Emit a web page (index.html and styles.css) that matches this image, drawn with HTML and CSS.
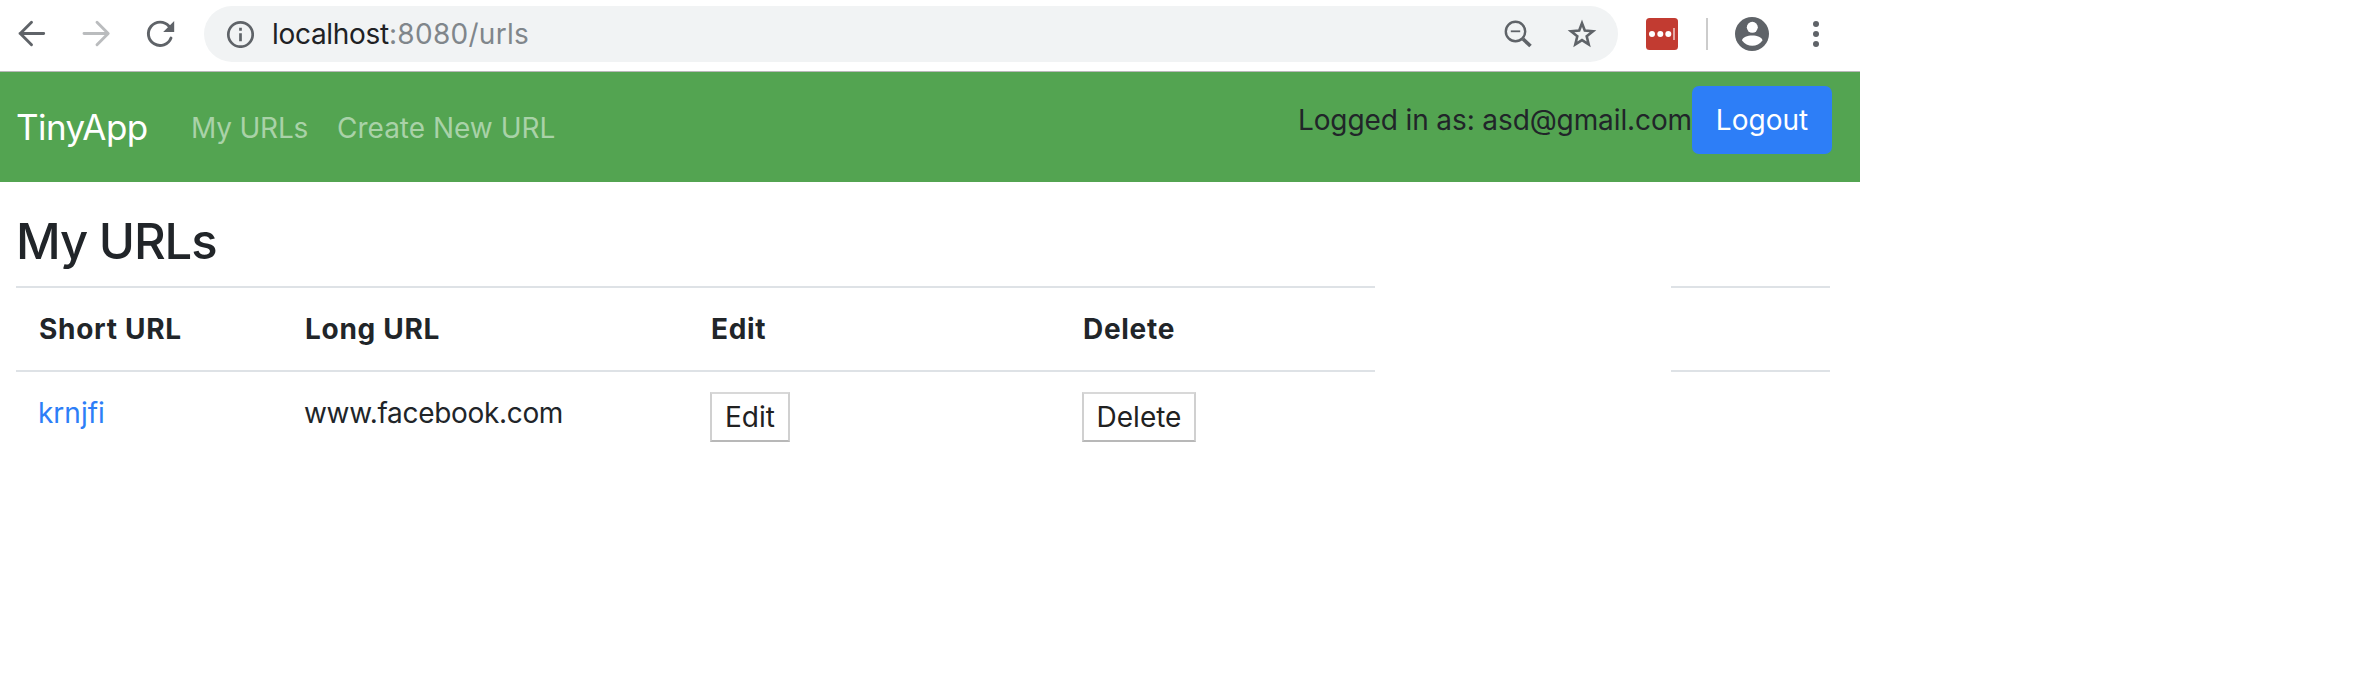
FILE: index.html
```html
<!DOCTYPE html>
<html lang="en">
<head>
<meta charset="utf-8">
<title>TinyApp</title>
<link rel="stylesheet" href="styles.css">
</head>
<body>
<div class="window">
  <header class="toolbar">
    <svg class="nav-icon" viewBox="0 0 32 32"><path d="M28.700 15.500H5M16.500 4.300L5.300 15.500 16.500 26.700"/></svg>
    <svg class="nav-icon disabled" viewBox="0 0 32 32"><path d="M5 15.500H28.500M18 4.300L29.200 15.500 18 26.700"/></svg>
    <svg class="nav-icon" viewBox="0 0 32 32"><path d="M28 20A11.700 11.700 0 1 1 26 8.200"/><path class="solid" d="M31.200 3V14H20.200Z"/></svg>
    <div class="omnibox">
      <svg class="info" viewBox="0 0 28 28"><circle cx="14.500" cy="14.500" r="12.200"/><path d="M14.500 13.300V21.300M14.500 7.700V10.700"/></svg>
      <div class="address"><span class="host">localhost</span><span class="path">:8080/urls</span></div>
      <svg class="magnifier" viewBox="0 0 28 28"><circle cx="11.500" cy="11.500" r="9.700"/><path class="minus" d="M6.800 11.300H16.200"/><path class="handle" d="M19 19L26.500 26"/></svg>
      <svg class="star" viewBox="0 0 30 30"><path d="M15 4.200L17.800 11.500 26 12.200 19.700 17.300 21.700 25.400 15 21.100 8.300 25.400 10.300 17.300 4 12.200 12.200 11.500Z"/></svg>
    </div>
    <svg class="extension" viewBox="0 0 32 32"><rect width="32" height="32" rx="3.500"/><circle cx="6" cy="16" r="3"/><circle cx="14.300" cy="16" r="3"/><circle cx="22.300" cy="16" r="3"/><path d="M28 10V22"/></svg>
    <div class="divider"></div>
    <svg class="profile" viewBox="0 0 34 34"><circle class="disc" cx="17" cy="17" r="17"/><circle cx="17.300" cy="10.300" r="5.500"/><path d="M7 23.500C8 16.800 26.500 16.800 27.500 23.500 22.500 30.600 12 30.600 7 23.500Z"/></svg>
    <svg class="menu" viewBox="0 0 6 28"><circle cx="3" cy="4" r="3"/><circle cx="3" cy="14" r="3"/><circle cx="3" cy="24" r="3"/></svg>
  </header>
  <nav class="navbar">
    <a class="brand">TinyApp</a>
    <a class="link my-urls">My URLs</a>
    <a class="link create">Create New URL</a>
    <div class="account">
      <span class="user">Logged in as: asd@gmail.com</span>
      <button class="logout">Logout</button>
    </div>
  </nav>
  <main class="content">
    <h1 class="title">My URLs</h1>
    <div class="tables">
      <table class="table urls">
        <colgroup><col class="col-short"><col class="col-long"><col class="col-edit"><col class="col-delete"></colgroup>
        <thead><tr><th>Short URL</th><th>Long URL</th><th>Edit</th><th>Delete</th></tr></thead>
        <tbody><tr><td><a class="short">krnjfi</a></td><td><span class="long">www.facebook.com</span></td><td><button class="action edit">Edit</button></td><td><button class="action delete">Delete</button></td></tr></tbody>
      </table>
      <table class="table spare"><thead><tr><th></th></tr></thead></table>
    </div>
  </main>
</div>
</body>
</html>
```
FILE: styles.css
```css
* { box-sizing: border-box; }
body { margin: 0; background: #fff; color: #212529; font: 28px/42px Inter, "Liberation Sans", sans-serif; }
button { font: inherit; }
svg { display: block; flex: none; fill: none; }
.window { width: 1860px; }

.toolbar { display: flex; align-items: center; height: 72px; padding: 0 0 3px 15px; border-bottom: 1px solid #b8b8b8; }
.nav-icon { width: 32px; height: 32px; margin-right: 32px; stroke: #5f6368; stroke-width: 2.900; stroke-linecap: round; stroke-linejoin: round; }
.nav-icon.disabled { stroke: #babcbe; }
.nav-icon .solid { fill: #5f6368; stroke: none; }
.omnibox { display: flex; align-items: center; width: 1414px; height: 56px; margin-left: -3px; padding-left: 22px; border-radius: 28px; background: #f1f3f4; }
.info { width: 28px; height: 28px; stroke: #5f6368; stroke-width: 2.700; }
.address { flex: none; width: 1250px; padding-left: 18px; letter-spacing: -0.300px; white-space: nowrap; }
.host { color: #202124; }
.path { color: #80868b; letter-spacing: 0.300px; }
.magnifier { width: 28px; height: 28px; stroke: #5f6368; stroke-width: 2.400; }
.magnifier .minus { stroke-width: 1.800; }
.magnifier .handle { stroke-width: 3.700; }
.star { width: 30px; height: 30px; margin-left: 35px; stroke: #5f6368; stroke-width: 2.600; }
.extension { width: 32px; height: 32px; margin-left: 28px; fill: #fff; }
.extension rect { fill: #c23b31; }
.extension path { stroke: #e9b6b2; stroke-width: 1.800; }
.divider { width: 2px; height: 32px; margin-left: 28px; background: #ccc; }
.profile { width: 34px; height: 34px; margin-left: 27px; fill: #fff; }
.profile .disc { fill: #5f6368; }
.menu { width: 6px; height: 28px; margin-left: 44px; fill: #5f6368; }

.navbar { display: flex; height: 110px; padding: 14px 28px 0 16px; background: #53a451; white-space: nowrap; }
.brand { width: 175px; padding-top: 20px; color: #fff; font-size: 35px; letter-spacing: -0.550px; }
.link { padding-top: 21px; color: #a9d2a8; }
.my-urls { width: 146px; letter-spacing: -0.200px; }
.account { display: flex; margin-left: auto; }
.user { padding-top: 13px; letter-spacing: -0.110px; }
.logout { width: 140px; height: 68px; padding: 0; border: 0; border-radius: 7px; background: #2d7ef7; color: #fff; }

.content { padding: 28px 30px 0 16px; }
.title { height: 76px; margin: 0; font-size: 49px; line-height: 64px; font-weight: 550; letter-spacing: -1.150px; white-space: nowrap; }
.tables { display: flex; justify-content: space-between; align-items: flex-start; }
.table { border-collapse: separate; border-spacing: 0; table-layout: fixed; }
.urls { width: 1359px; }
.spare { width: 159px; }
.col-short { width: 266px; }
.col-long { width: 406px; }
.col-edit { width: 372px; }
.table th { height: 86px; padding: 0 22px 0 23px; border-top: 2px solid #dee2e6; border-bottom: 2px solid #dee2e6; text-align: left; letter-spacing: 0.700px; white-space: nowrap; }
.table td { padding: 20px 22px 0; vertical-align: top; white-space: nowrap; }
.short { color: #2d7ef7; }
.long { letter-spacing: -0.320px; }
.action { display: block; height: 50px; padding: 0; border: 2px solid; border-color: #d8d8d8 #d0d0d0 #b8b8b8; background: #fff; color: #212121; line-height: 40px; }
.edit { width: 80px; }
.delete { width: 114px; }
```
